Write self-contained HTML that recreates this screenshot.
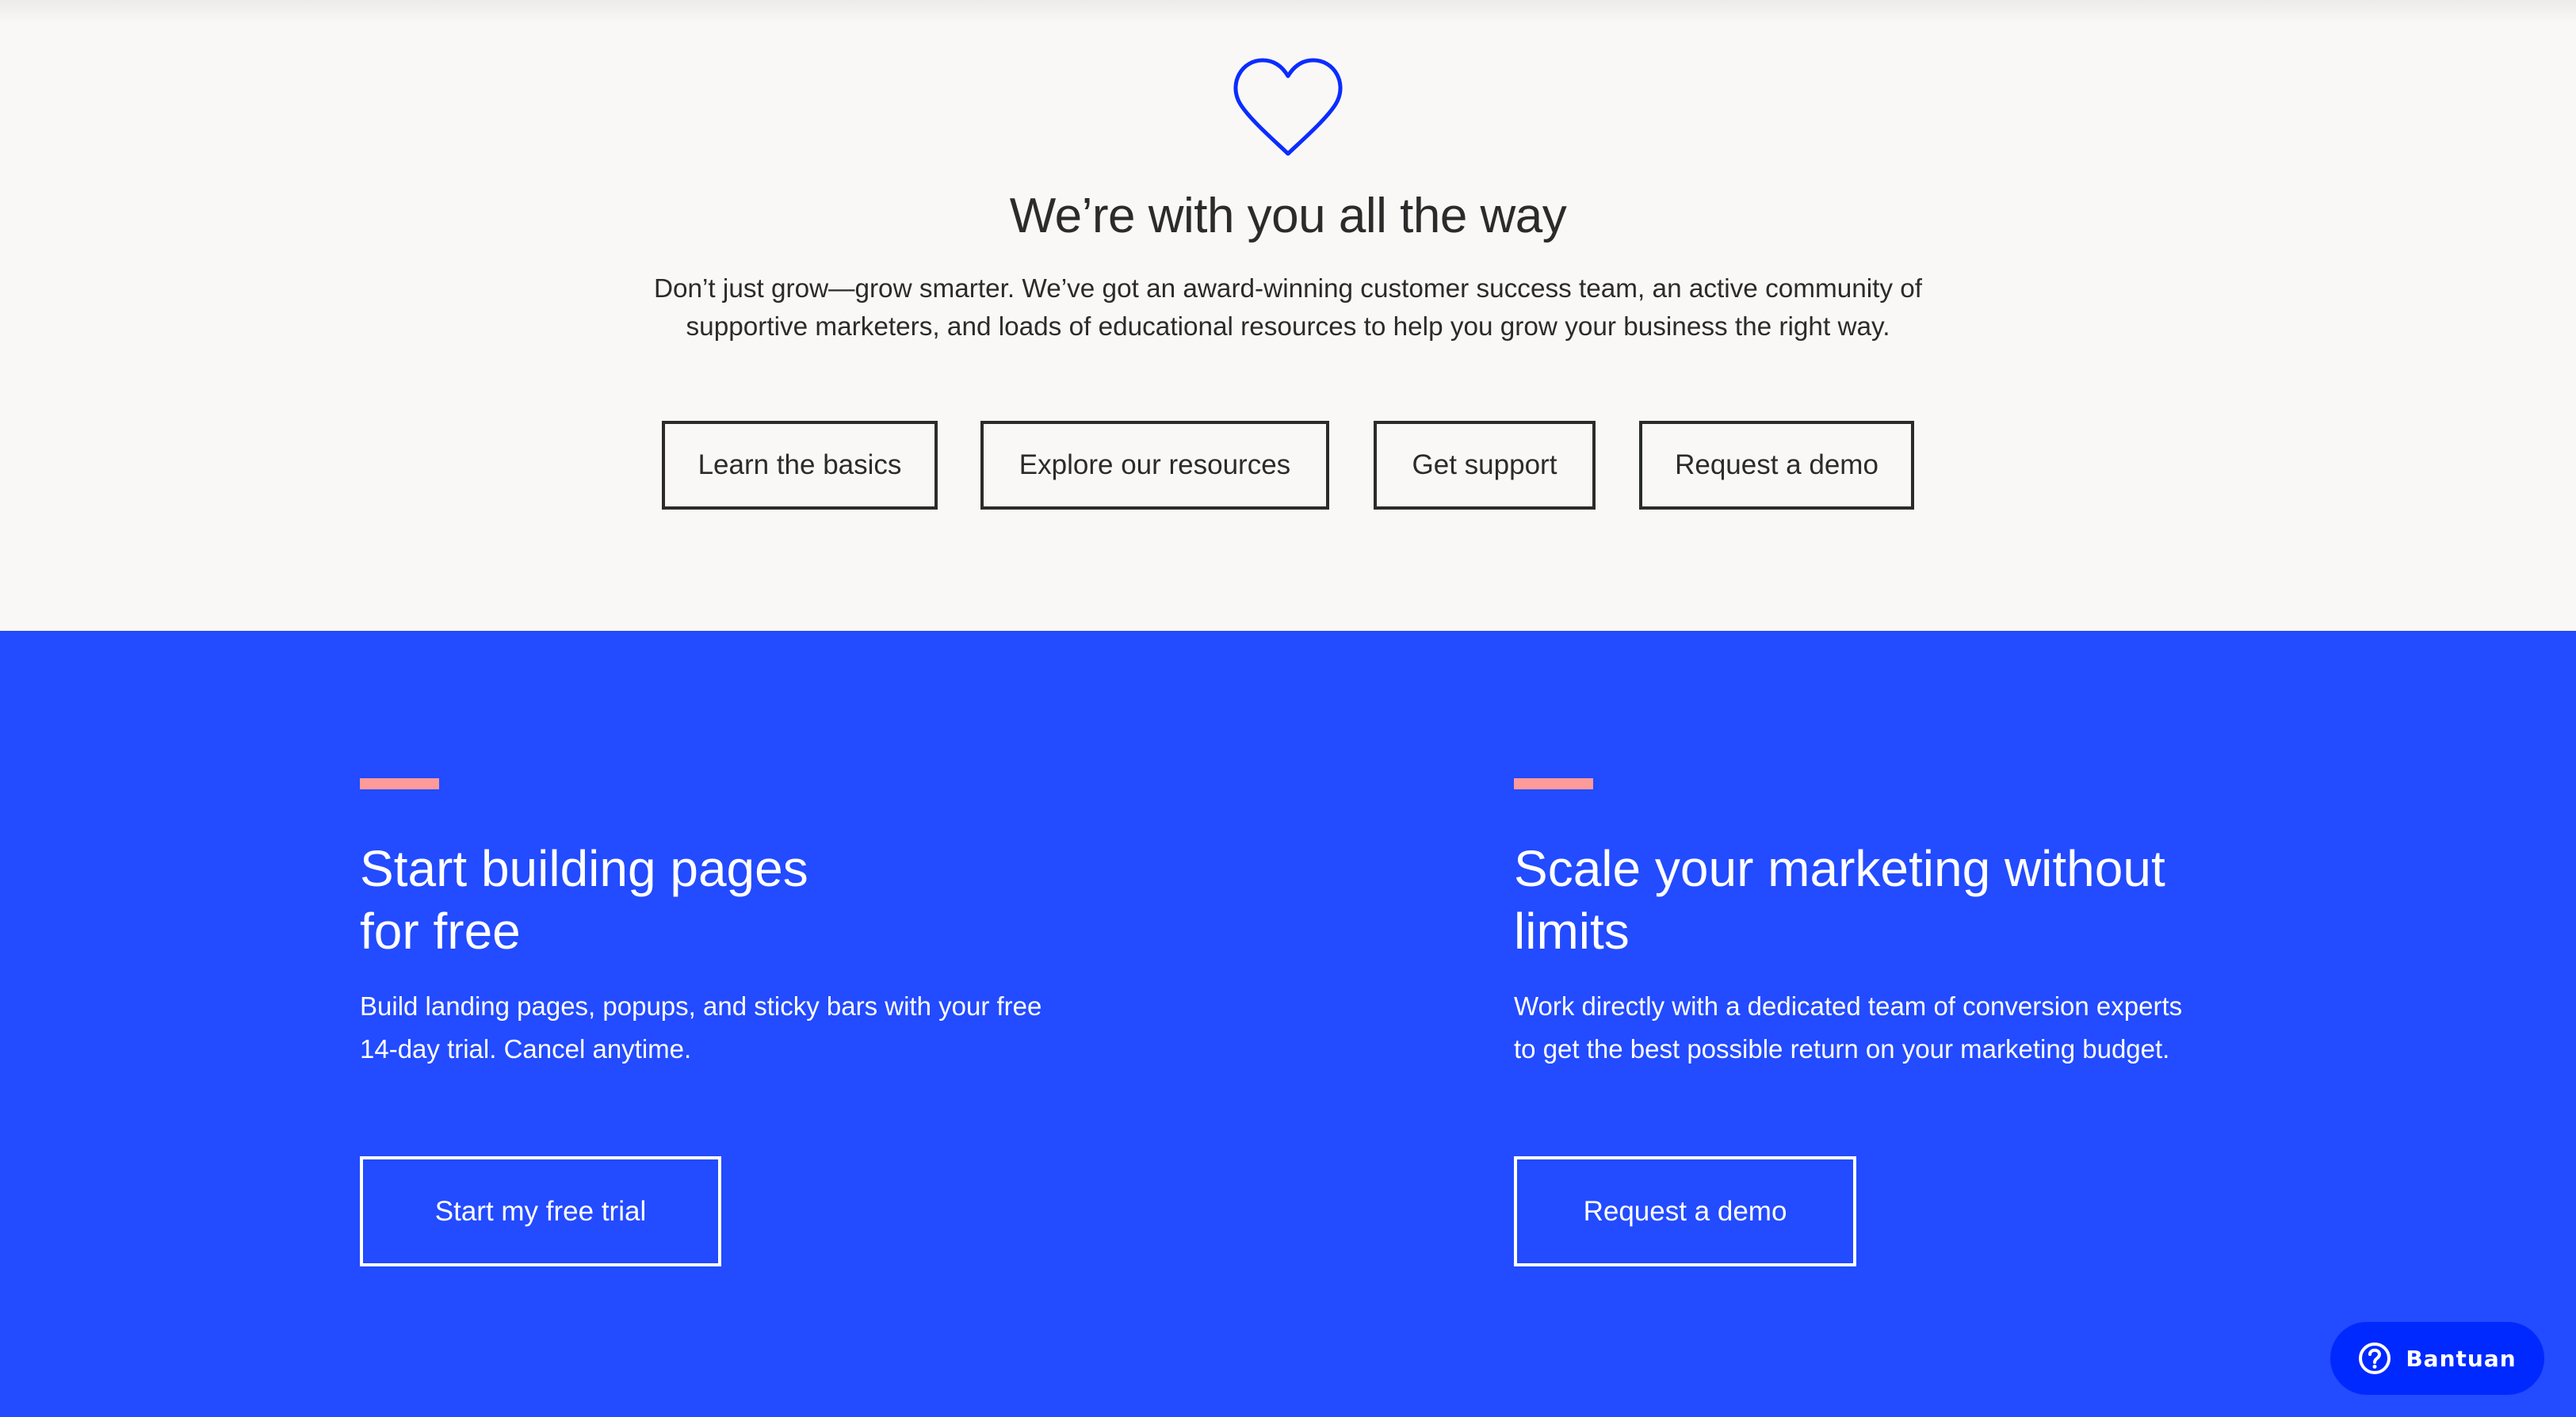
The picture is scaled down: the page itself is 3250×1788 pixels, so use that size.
<!DOCTYPE html>
<html><head><meta charset="utf-8"><style>
*{margin:0;padding:0;box-sizing:border-box}
body{width:3250px;height:1788px;position:relative;overflow:hidden;font-family:"Liberation Sans",sans-serif;background:#f9f8f6}
.top{position:absolute;left:0;top:0;width:3250px;height:796px;background:#f9f8f6}
.shadow{position:absolute;left:0;top:0;width:3250px;height:30px;background:linear-gradient(#ecebe9,rgba(249,248,246,0))}
.blue{position:absolute;left:0;top:796px;width:3250px;height:992px;background:#234bff}
.abs{position:absolute;white-space:nowrap}
.title{left:0;width:3250px;text-align:center;top:238px;font-size:62px;line-height:70px;color:#2b2b2b;letter-spacing:-0.5px}
.para{left:0;width:3250px;text-align:center;top:341px;font-size:33.3px;line-height:48px;color:#2b2b2b}
.btn{position:absolute;top:531px;height:112px;border:4px solid #2b2b2b;display:flex;align-items:center;justify-content:center;font-size:35px;color:#2b2b2b}
.bar{position:absolute;top:982px;width:100px;height:14px;background:#ff9a9a}
.h{top:1057px;font-size:64px;line-height:79px;color:#fff}
.p{top:1243px;font-size:33px;line-height:54px;color:#fff}
.wbtn{position:absolute;top:1459px;height:139px;border:4px solid #fff;display:flex;align-items:center;justify-content:center;font-size:35px;color:#fff}
.help{position:absolute;left:2940px;top:1668px;width:270px;height:92px;border-radius:46px;background:#0029ff;color:#fff;display:flex;align-items:center;justify-content:center;font-family:"DejaVu Sans",sans-serif;font-weight:bold;font-size:28px;letter-spacing:1px}
</style></head><body>
<div class="top"></div>
<div class="shadow"></div>
<svg style="position:absolute;left:1553px;top:70px" width="144" height="130" viewBox="0 0 144 130"><path d="M72 124 C60 112 20 78 10 58 C-2 34 14 6 40 6 C56 6 66 16 72 26 C78 16 88 6 104 6 C130 6 146 34 134 58 C124 78 84 112 72 124 Z" fill="none" stroke="#0b2cff" stroke-width="5" stroke-linejoin="round"/></svg>
<div class="abs title">We’re with you all the way</div>
<div class="abs para">Don’t just grow—grow smarter. We’ve got an award-winning customer success team, an active community of<br>supportive marketers, and loads of educational resources to help you grow your business the right way.</div>
<div class="btn" style="left:835px;width:348px">Learn the basics</div>
<div class="btn" style="left:1237px;width:440px">Explore our resources</div>
<div class="btn" style="left:1733px;width:280px">Get support</div>
<div class="btn" style="left:2068px;width:347px">Request a demo</div>
<div class="blue"></div>
<div class="bar" style="left:454px"></div>
<div class="bar" style="left:1910px"></div>
<div class="abs h" style="left:454px">Start building pages<br>for free</div>
<div class="abs h" style="left:1910px">Scale your marketing without<br>limits</div>
<div class="abs p" style="left:454px">Build landing pages, popups, and sticky bars with your free<br>14-day trial. Cancel anytime.</div>
<div class="abs p" style="left:1910px">Work directly with a dedicated team of conversion experts<br>to get the best possible return on your marketing budget.</div>
<div class="wbtn" style="left:454px;width:456px">Start my free trial</div>
<div class="wbtn" style="left:1910px;width:432px">Request a demo</div>
<div class="help"><svg width="42" height="42" viewBox="0 0 42 42" style="margin-right:18px"><circle cx="21" cy="21" r="18" fill="none" stroke="#fff" stroke-width="4"/><path d="M15 16 C15 9 27 9 27 16 C27 21 21 21 21 26" fill="none" stroke="#fff" stroke-width="4" stroke-linecap="round"/><circle cx="21" cy="31.5" r="2.5" fill="#fff"/></svg>Bantuan</div>
</body></html>
